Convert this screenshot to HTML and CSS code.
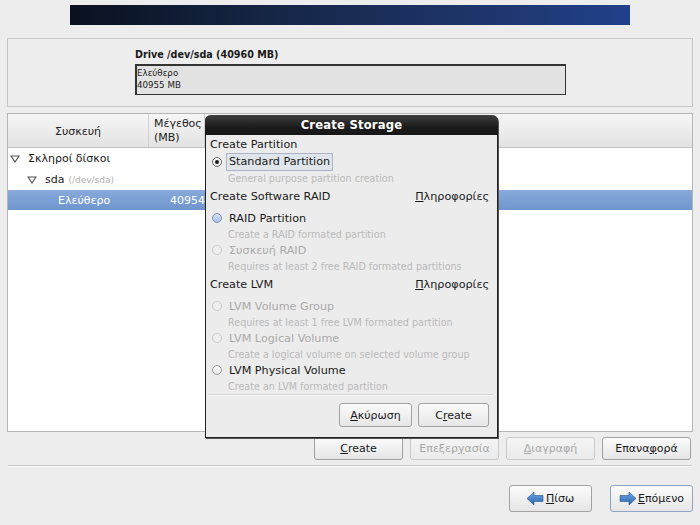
FILE: index.html
```html
<!DOCTYPE html>
<html lang="el">
<head>
<meta charset="utf-8">
<title>Create Storage</title>
<link rel="stylesheet" href="styles.css">
</head>
<body>
<div class="page">
  <div class="banner"></div>

  <div class="drive-panel">
    <div class="drive-title">Drive /dev/sda (40960 MB)</div>
    <div class="drive-box">
      <div>Ελεύθερο</div>
      <div>40955 MB</div>
    </div>
  </div>

  <div class="tree">
    <div class="tree-head">
      <div class="col-dev">Συσκευή</div>
      <div class="col-size">Μέγεθος (MB)</div>
      <div class="col-rest"></div>
    </div>
    <div class="tree-row">
      <svg class="expander" width="10" height="8" viewBox="0 0 10 8"><polygon points="1,1 9,1 5,7" fill="#fff" stroke="#555" stroke-width="1.2"/></svg>
      <span>Σκληροί δίσκοι</span>
    </div>
    <div class="tree-row lvl2">
      <svg class="expander" width="10" height="8" viewBox="0 0 10 8"><polygon points="1,1 9,1 5,7" fill="#fff" stroke="#555" stroke-width="1.2"/></svg>
      <span>sda</span><span class="muted">(/dev/sda)</span>
    </div>
    <div class="tree-row selected">
      <span class="free-name">Ελεύθερο</span>
      <span class="free-size">40954</span>
    </div>
  </div>

  <div class="actions">
    <button class="btn act"><u>C</u>reate</button>
    <button class="btn act disabled">Επεξερ<u>γ</u>ασία</button>
    <button class="btn act disabled"><u>Δ</u>ιαγραφή</button>
    <button class="btn act">Επανα<u>φ</u>ορά</button>
  </div>

  <div class="separator"></div>

  <div class="nav">
    <button class="btn navbtn">
      <svg width="17" height="13" viewBox="0 0 17 13"><defs><linearGradient id="ab" x1="0" y1="0" x2="0" y2="1"><stop offset="0" stop-color="#6ea6e6"/><stop offset="1" stop-color="#2a64ac"/></linearGradient></defs><polygon points="0,6.5 7,0 7,3.5 16,3.5 16,9.5 7,9.5 7,13" fill="url(#ab)" stroke="#23568f" stroke-width="0.6"/></svg>
      <span><u>Π</u>ίσω</span>
    </button>
    <button class="btn navbtn default">
      <svg width="17" height="13" viewBox="0 0 17 13"><defs><linearGradient id="an" x1="0" y1="0" x2="0" y2="1"><stop offset="0" stop-color="#6ea6e6"/><stop offset="1" stop-color="#2a64ac"/></linearGradient></defs><polygon points="17,6.5 10,0 10,3.5 1,3.5 1,9.5 10,9.5 10,13" fill="url(#an)" stroke="#23568f" stroke-width="0.6"/></svg>
      <span><u>Ε</u>πόμενο</span>
    </button>
  </div>

  <div class="dialog">
    <div class="dialog-title">Create Storage</div>
    <div class="dialog-body">
      <div class="heading">Create Partition</div>
      <div class="radio-row"><span class="radio checked"></span><span class="focus-label">Standard Partition</span></div>
      <div class="desc">General purpose partition creation</div>

      <div class="heading split"><span>Create Software RAID</span><span class="info"><u>Π</u>ληροφορίες</span></div>
      <div class="radio-row first"><span class="radio hover"></span><span>RAID Partition</span></div>
      <div class="desc">Create a RAID formated partition</div>
      <div class="radio-row off"><span class="radio"></span><span>Συσκευή RAID</span></div>
      <div class="desc">Requires at least 2 free RAID formated partitions</div>

      <div class="heading split"><span>Create LVM</span><span class="info"><u>Π</u>ληροφορίες</span></div>
      <div class="radio-row first off"><span class="radio"></span><span>LVM Volume Group</span></div>
      <div class="desc">Requires at least 1 free LVM formated partition</div>
      <div class="radio-row off"><span class="radio"></span><span>LVM Logical Volume</span></div>
      <div class="desc">Create a logical volume on selected volume group</div>
      <div class="radio-row"><span class="radio"></span><span>LVM Physical Volume</span></div>
      <div class="desc">Create an LVM formated partition</div>

      <div class="dialog-sep"></div>
      <div class="dialog-buttons">
        <button class="btn dbtn cancel"><u>Α</u>κύρωση</button>
        <button class="btn dbtn">C<u>r</u>eate</button>
      </div>
    </div>
  </div>
</div>
</body>
</html>
```

FILE: styles.css
```css
* { box-sizing: border-box; }

html, body {
  margin: 0;
  padding: 0;
  background: #ededed;
}

body {
  font-family: "DejaVu Sans", "Liberation Sans", sans-serif;
  font-size: 11px;
  color: #1a1a1a;
}

.page {
  position: relative;
  width: 700px;
  height: 525px;
  overflow: hidden;
  display: flex;
  flex-direction: column;
}

u { text-decoration: underline; text-underline-offset: 1px; }

.banner {
  margin: 5px 0 0 70px;
  width: 560px;
  height: 20px;
  background: linear-gradient(to right, #0a1120 0%, #152544 35%, #1d3468 70%, #22408a 100%);
}

/* drive panel */
.drive-panel {
  margin: 13px 7px 0;
  height: 69px;
  border: 1px solid #c6c6c6;
  padding: 9px 0 0 127px;
}

.drive-title {
  font-weight: bold;
  font-size: 9.6px;
  line-height: 13px;
  height: 14px;
}

.drive-box {
  margin-top: 2px;
  width: 431px;
  height: 31px;
  border: 1px solid #333;
  border-top-width: 2px;
  border-left-width: 2px;
  background: #e2e2e2;
  padding: 1px 1px 1px 0;
  font-size: 8.7px;
  line-height: 12px;
  color: #222;
}

/* tree */
.tree {
  margin: 6px 7px 0;
  height: 319px;
  border: 1px solid #b6b6b6;
  background: #fff;
}

.tree-head {
  display: flex;
  height: 34px;
  background: linear-gradient(#f6f6f6, #e2e2e2);
  border-bottom: 1px solid #c4c4c4;
  color: #222;
}

.col-dev {
  width: 140px;
  display: flex;
  align-items: center;
  justify-content: center;
  padding-top: 1px;
}

.col-size {
  width: 56px;
  border-left: 1px solid #d0d0d0;
  padding: 3px 0 0 5px;
  line-height: 14px;
}

.col-rest {
  flex: 1;
  border-left: 1px solid #d0d0d0;
}

.tree-row {
  height: 21px;
  display: flex;
  align-items: center;
  padding-left: 2px;
}

.tree-row .expander { margin-right: 8px; }

.tree-row.lvl2 { padding-left: 19px; }

.tree-row .muted {
  color: #b0b0b0;
  font-size: 9px;
  margin-left: 4px;
}

.tree-row.selected {
  height: 20px;
  background: linear-gradient(#88aadb, #6e95cd);
  color: #fff;
}

.free-name { margin-left: 48px; width: 112px; }

/* buttons */
.btn {
  font-family: "DejaVu Sans", "Liberation Sans", sans-serif;
  font-size: 11px;
  color: #1a1a1a;
  background: linear-gradient(#fbfbfb, #e6e6e6);
  border: 1px solid #a2a2a2;
  border-radius: 3px;
  padding: 0;
  margin: 0;
}

.btn.disabled {
  color: #a8a8a8;
  border-color: #c8c8c8;
  background: linear-gradient(#f4f4f4, #ebebeb);
}

.actions {
  margin-top: 5px;
  height: 23px;
  display: flex;
  justify-content: flex-end;
  gap: 7px;
  padding-right: 9px;
}

.btn.act { width: 89px; height: 23px; }

.separator {
  margin: 5px 8px 0;
  height: 2px;
  border-top: 1px solid #c8c8c8;
  border-bottom: 1px solid #f8f8f8;
}

.nav {
  margin-top: 18px;
  display: flex;
  justify-content: flex-end;
  gap: 18px;
  padding-right: 7px;
}

.btn.navbtn {
  width: 83px;
  height: 27px;
  display: flex;
  align-items: center;
  justify-content: center;
  gap: 2px;
}

.btn.navbtn.default { border-color: #8ea4c4; }

/* dialog */
.dialog {
  position: absolute;
  left: 205px;
  top: 115px;
  width: 293px;
  height: 323px;
  background: #ececec;
  border: 1px solid #202020;
  border-top: none;
  border-radius: 6px 6px 0 0;
  box-shadow: 1px 1px 0 #555;
}

.dialog-title {
  height: 20px;
  line-height: 20px;
  text-align: center;
  color: #fff;
  font-weight: bold;
  font-size: 11.6px;
  background: linear-gradient(#3e3e3e, #1c1c1c 60%, #161616);
  border-radius: 6px 6px 0 0;
  margin: 0 -1px;
  letter-spacing: 0.2px;
}

.dialog-body {
  padding: 1px 8px 0 4px;
  font-size: 11.2px;
}

.heading {
  height: 18px;
  line-height: 18px;
}

.heading.split {
  margin-top: 2px;
  display: flex;
  justify-content: space-between;
}

.radio-row {
  height: 16px;
  display: flex;
  align-items: center;
}

.radio-row.first { margin-top: 4px; }

.radio-row.off { color: #aaaaaa; }

.radio {
  width: 10px;
  height: 10px;
  border-radius: 50%;
  border: 1px solid #9a9a9a;
  background: linear-gradient(#ffffff, #e6e6e6);
  margin: 0 7px 0 2px;
  position: relative;
  flex: none;
}

.radio-row.off .radio { border-color: #cbcbcb; background: #eeeeee; }

.radio.checked { border-color: #6a6a6a; }
.radio.checked::after {
  content: "";
  position: absolute;
  left: 2px;
  top: 2px;
  width: 4px;
  height: 4px;
  border-radius: 50%;
  background: #1a1a1a;
}

.radio.hover {
  border-color: #7d93b8;
  background: linear-gradient(#d4e0f2, #aec3e4);
}

.focus-label {
  margin-left: -3px;
  padding: 0 2px;
  border: 1px solid #aab4c6;
  background: #e0e5ec;
  height: 18px;
  line-height: 16px;
}

.desc {
  height: 16px;
  padding: 2px 0 0 18px;
  line-height: 14px;
  font-size: 9.6px;
  color: #bababa;
}

.dialog-sep {
  margin: 0 -5px 0 -2px;
  height: 2px;
  border-top: 1px solid #d2d2d2;
  border-bottom: 1px solid #fafafa;
}

.dialog-buttons {
  margin-top: 7px;
  display: flex;
  justify-content: flex-end;
  gap: 6px;
}

.btn.dbtn { width: 71px; height: 24px; }
.btn.dbtn.cancel { width: 73px; }
```
